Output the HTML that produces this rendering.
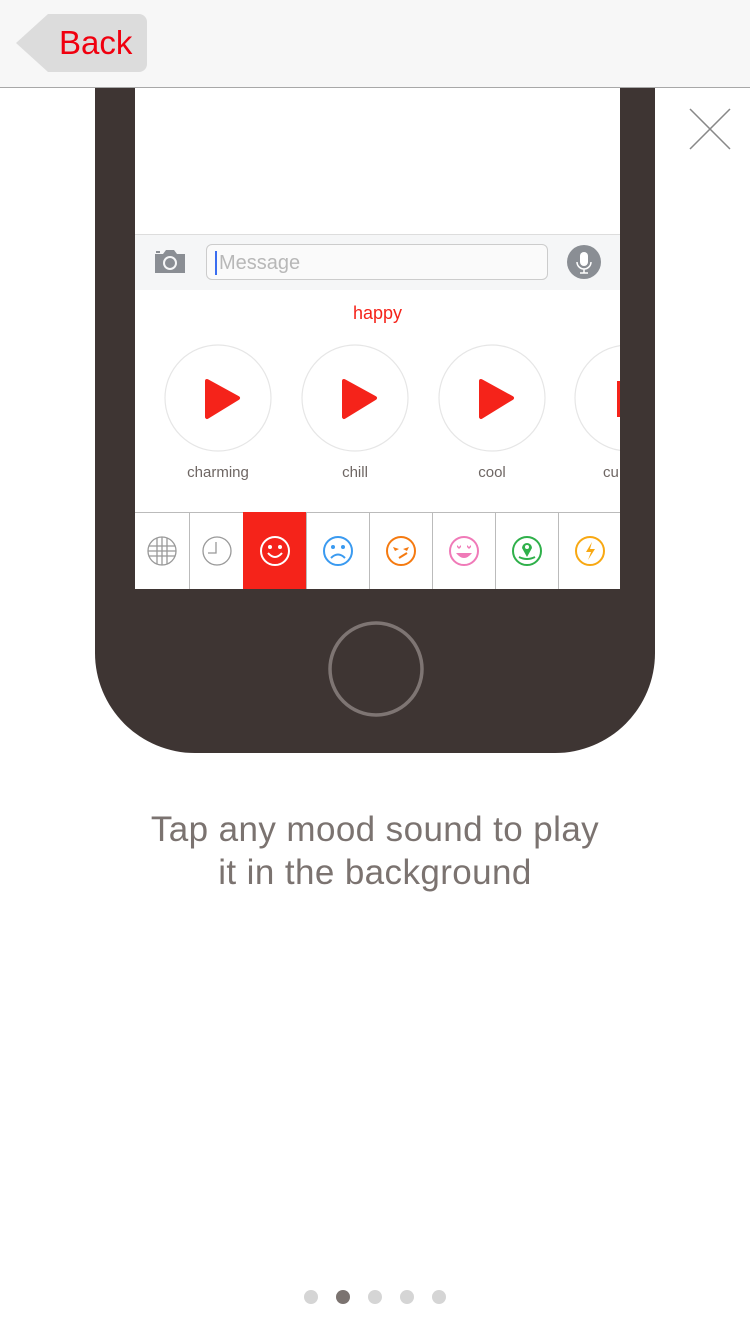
<!DOCTYPE html>
<html><head><meta charset="utf-8"><style>
*{margin:0;padding:0;box-sizing:border-box}
body{width:750px;height:1334px;background:#fff;position:relative;overflow:hidden;font-family:"Liberation Sans",sans-serif}
.nav{position:absolute;left:0;top:0;width:750px;height:88px;background:#f7f7f7;border-bottom:1px solid #a8a8a8}
.phone{position:absolute;left:95px;top:88px;width:560px;height:665px;background:#3e3533;border-radius:0 0 100px 100px}
.screen{position:absolute;left:40px;top:0;width:485px;height:501px;background:#fff;overflow:hidden}
.abs{position:absolute}
.cell{position:absolute;top:424px;height:77px;border-left:1px solid #bbb;display:flex;align-items:center;justify-content:center}
</style></head><body>
<div class="nav">
<svg class="abs" style="left:14px;top:14px" width="133" height="58"><path d="M34 0H125a8 8 0 0 1 8 8V50a8 8 0 0 1-8 8H34L2 29Z" fill="#dcdcdc"/></svg>
<div class="abs" style="left:59px;top:24px;font-size:33px;color:#f0000f">Back</div>
</div>
<svg class="abs" style="left:688px;top:108px" width="44" height="42"><path d="M2 1L42 41M42 1L2 41" stroke="#888" stroke-width="1.5"/></svg>
<div class="phone">
<div class="screen">
<div class="abs" style="left:0;top:146px;width:485px;height:56px;background:#f5f6f7;border-top:1px solid #ddd"></div>
<svg class="abs" style="left:18px;top:160px" width="34" height="26"><path d="M2 6H10L13 2H21L24 6H32V25H2Z" fill="#8a8e94"/><circle cx="17" cy="15" r="6" fill="none" stroke="#f5f6f7" stroke-width="2"/><rect x="3" y="3" width="4" height="2" fill="#8a8e94"/></svg>
<div class="abs" style="left:71px;top:156px;width:342px;height:36px;border:1px solid #ccc;border-radius:6px;background:#fafafa"></div>
<div class="abs" style="left:80px;top:163px;width:2px;height:24px;background:#3a6df0"></div>
<div class="abs" style="left:84px;top:164px;font-size:20px;color:#b8b8b8">Message</div>
<svg class="abs" style="left:432px;top:157px" width="34" height="34"><circle cx="17" cy="17" r="17" fill="#8a8e94"/><rect x="13" y="7" width="8" height="14" rx="4" fill="#fff"/><path d="M10 17a7 7 0 0 0 14 0M17 24V28M13 28H21" stroke="#fff" stroke-width="1.5" fill="none"/></svg>
<div class="abs" style="left:0;top:215px;width:485px;text-align:center;font-size:18px;color:#f5231a">happy</div>
<svg class="abs" style="left:0;top:255px" width="485" height="110">
<g fill="none" stroke="#e6e6e6" stroke-width="1.2"><circle cx="83" cy="55" r="53"/><circle cx="220" cy="55" r="53"/><circle cx="357" cy="55" r="53"/><circle cx="493" cy="55" r="53"/></g>
<g fill="#f5231a"><path d="M72 38L103 55L72 74Z" stroke="#f5231a" stroke-width="4" stroke-linejoin="round"/><path d="M209 38L240 55L209 74Z" stroke="#f5231a" stroke-width="4" stroke-linejoin="round"/><path d="M346 38L377 55L346 74Z" stroke="#f5231a" stroke-width="4" stroke-linejoin="round"/><rect x="482" y="38" width="10" height="36"/></g>
</svg>
<div class="abs" style="left:23px;top:376px;width:120px;text-align:center;font-size:15px;color:#6e6663">charming</div>
<div class="abs" style="left:160px;top:376px;width:120px;text-align:center;font-size:15px;color:#6e6663">chill</div>
<div class="abs" style="left:297px;top:376px;width:120px;text-align:center;font-size:15px;color:#6e6663">cool</div>
<div class="abs" style="left:468px;top:376px;font-size:15px;color:#6e6663">cu</div>
<div class="abs" style="left:0;top:424px;width:485px;height:1px;background:#bbb"></div>
<div class="cell" style="left:-1px;width:55px;border-left:none"><svg width="32" height="32"><g fill="none" stroke="#999" stroke-width="1.3"><circle cx="16" cy="16" r="14"/><path d="M3 11H29M2 16H30M3 21H29M11 3V29M16 2V30M21 3V29"/></g></svg></div>
<div class="cell" style="left:54px;width:54px"><svg width="32" height="32"><g fill="none" stroke="#999" stroke-width="1.3"><circle cx="16" cy="16" r="14"/><path d="M15 7V18H7"/></g></svg></div>
<div class="cell" style="left:108px;width:63px;background:#f5231a;border-left-color:#f5231a"><svg width="32" height="32"><g fill="none" stroke="#fff" stroke-width="2"><circle cx="16" cy="16" r="14"/><path d="M9 18Q16 26 23 18"/></g><circle cx="11" cy="12" r="2" fill="#fff"/><circle cx="21" cy="12" r="2" fill="#fff"/></svg></div>
<div class="cell" style="left:171px;width:63px"><svg width="32" height="32"><g fill="none" stroke="#3a9af0" stroke-width="2"><circle cx="16" cy="16" r="14"/><path d="M9 23Q16 16 23 23"/></g><circle cx="11" cy="12" r="2" fill="#3a9af0"/><circle cx="21" cy="12" r="2" fill="#3a9af0"/></svg></div>
<div class="cell" style="left:234px;width:63px"><svg width="32" height="32"><g fill="none" stroke="#f57a10" stroke-width="2"><circle cx="16" cy="16" r="14"/><path d="M14 23L22 18"/></g><path d="M8 12L14 14L10 16Z M18 14L24 12L22 16Z" fill="#f57a10"/></svg></div>
<div class="cell" style="left:297px;width:63px"><svg width="32" height="32"><circle cx="16" cy="16" r="14" fill="none" stroke="#f07ab8" stroke-width="2"/><path d="M8 18H24Q16 28 8 18Z" fill="#f07ab8"/><path d="M9 10l2 2 2-2v2l-2 2-2-2z M19 10l2 2 2-2v2l-2 2-2-2z" fill="#f07ab8"/></svg></div>
<div class="cell" style="left:360px;width:63px"><svg width="32" height="32"><g fill="none" stroke="#2fb04a" stroke-width="2"><circle cx="16" cy="16" r="14"/><path d="M8 22Q16 26 24 22"/></g><path d="M16 22L11 13a5 5 0 1 1 10 0Z" fill="#2fb04a"/><circle cx="16" cy="12" r="2" fill="#fff"/></svg></div>
<div class="cell" style="left:423px;width:63px"><svg width="32" height="32"><circle cx="16" cy="16" r="14" fill="none" stroke="#f8a812" stroke-width="2"/><path d="M18 7L12 17H17L14 25L21 14H16Z" fill="#f8a812"/></svg></div>
</div>
<svg class="abs" style="left:232px;top:532px" width="98" height="98"><circle cx="49" cy="49" r="46" fill="none" stroke="#7e7573" stroke-width="3.5"/></svg>
</div>
<div class="abs" style="left:0;top:808px;width:750px;text-align:center;font-size:35px;line-height:43px;letter-spacing:0.4px;color:#7b7370">Tap any mood sound to play<br>it in the background</div>
<svg class="abs" style="left:300px;top:1288px" width="150" height="18"><g fill="#d5d5d5"><circle cx="11" cy="9" r="7"/><circle cx="75" cy="9" r="7"/><circle cx="107" cy="9" r="7"/><circle cx="139" cy="9" r="7"/></g><circle cx="43" cy="9" r="7" fill="#7b7370"/></svg>
</body></html>
